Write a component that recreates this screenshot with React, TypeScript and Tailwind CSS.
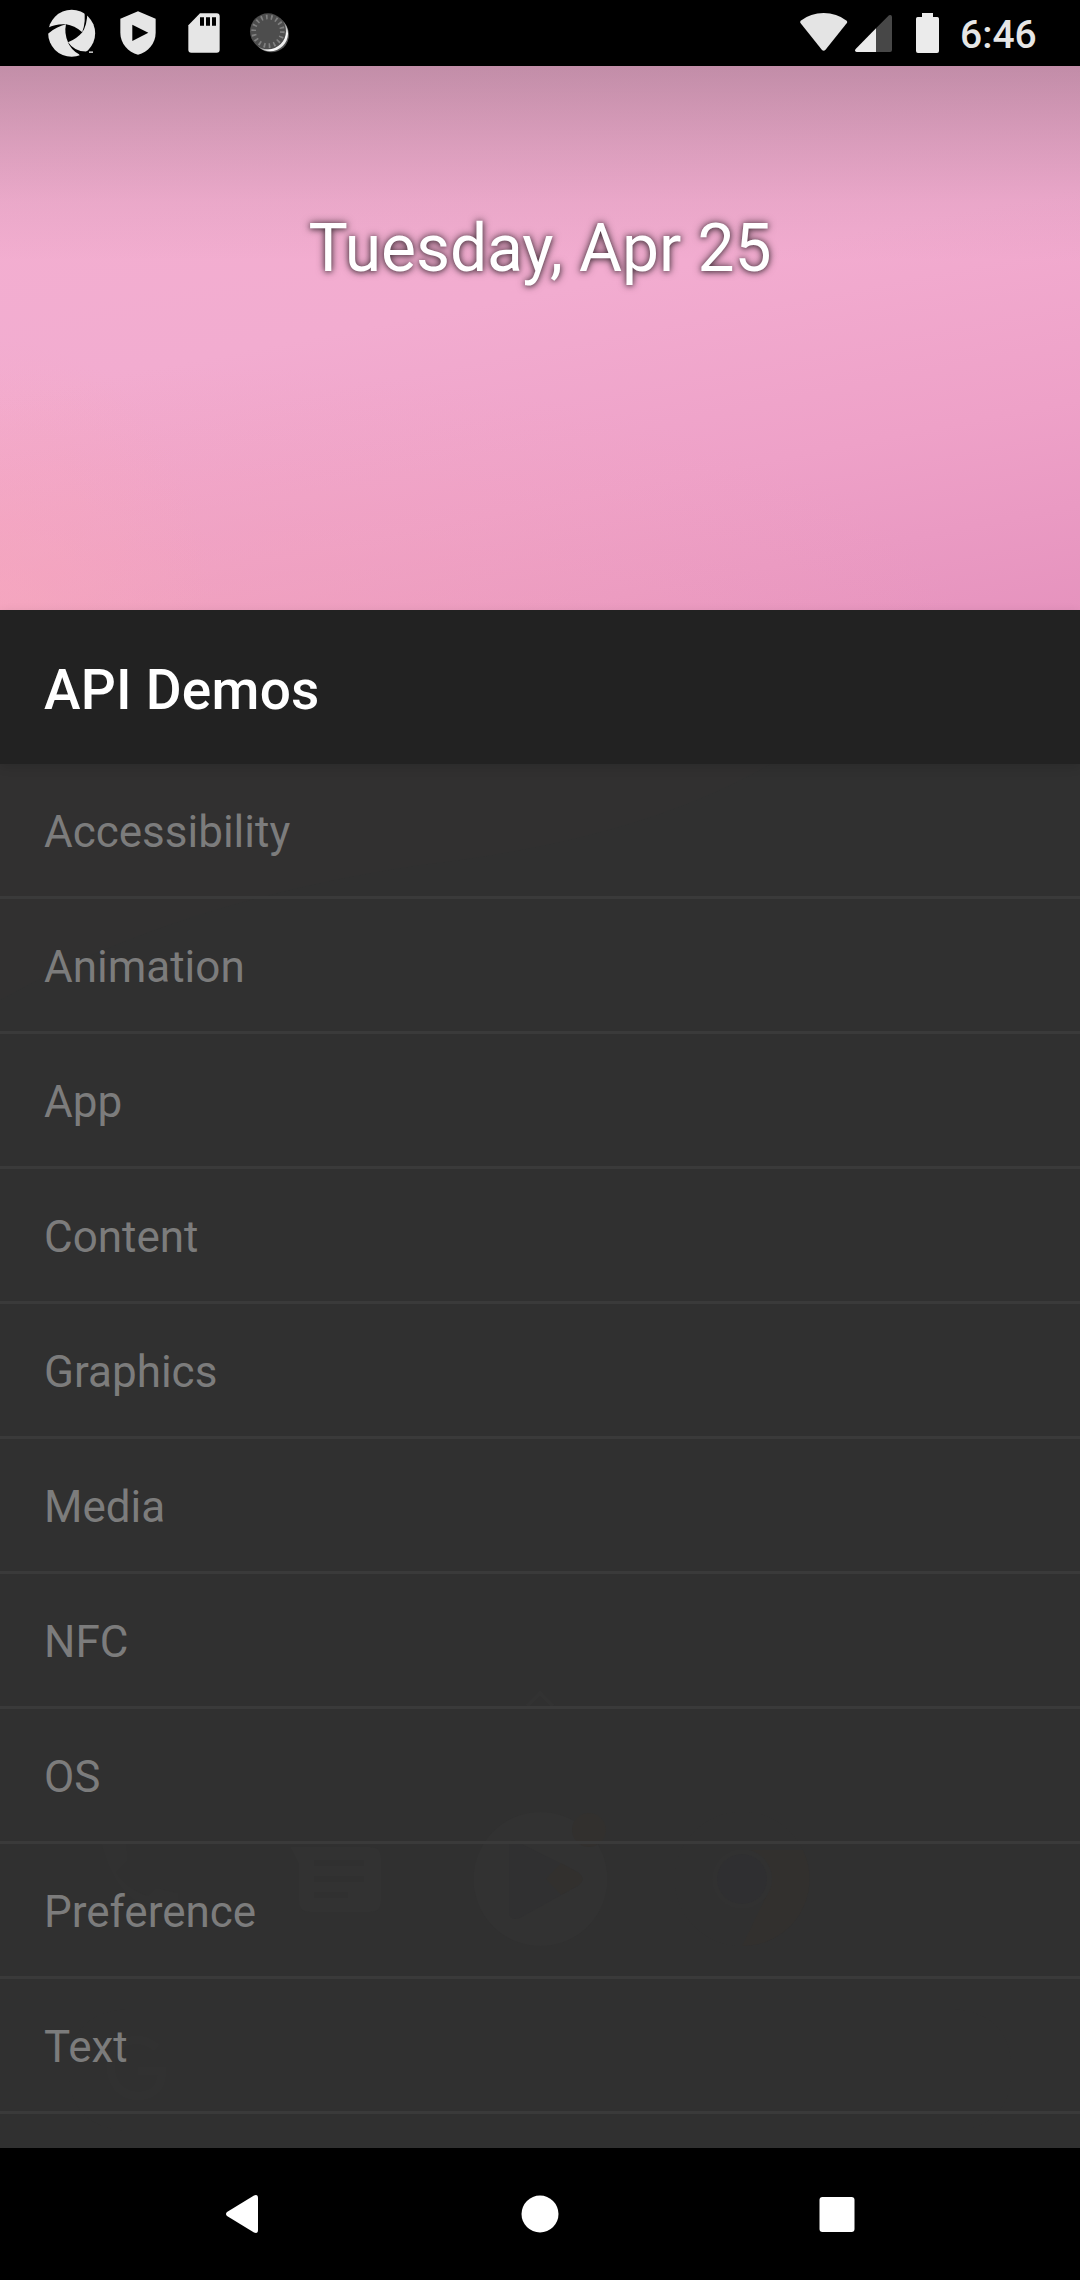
import type { ReactNode } from "react";

const items = [
  "Accessibility",
  "Animation",
  "App",
  "Content",
  "Graphics",
  "Media",
  "NFC",
  "OS",
  "Preference",
  "Text",
];

function ApertureIcon() {
  return (
    <svg className="h-[50px] w-[50px]" viewBox="144 27 150 150">
      <circle cx="215" cy="100" r="70.5" fill="#e6e6e6" />
      <path d="M198 73Q223 76 247 97Q230 117 204 127Q192 100 198 73Z" fill="#000" />
      <path d="M140 86Q165 70 200 73Q172 78 144 101Z" fill="#000" />
      <path d="M252 28Q259 66 246 98Q262 76 262 36Z" fill="#000" />
      <path d="M203 125Q212 148 237 163L246 180L266 154Q226 158 203 125Z" fill="#000" />
      <path d="M267 154h12v5h-12z" fill="#bbb" />
    </svg>
  );
}

function ShieldIcon() {
  return (
    <svg className="h-[44px] w-[36px]" viewBox="360 33 108 132">
      <path
        d="M414 34L467 56V98C467 130 444 156 414 164C384 156 361 130 361 98V56Z"
        fill="#e6e6e6"
      />
      <path d="M397 74L445 98.500L397 123Z" fill="#000" />
    </svg>
  );
}

function SdCardIcon() {
  return (
    <svg className="h-[40px] w-[32px]" viewBox="564 39 96 120">
      <path
        d="M600 40H650Q659 40 659 49V149Q659 158 650 158H574Q565 158 565 149V76Z"
        fill="#e6e6e6"
      />
      <path d="M600 52h12v25h-12zM618 52h12v25h-12zM636 52h12v25h-12z" fill="#000" />
    </svg>
  );
}

function SpinnerIcon() {
  return (
    <svg className="h-[42px] w-[42px]" viewBox="747 36 126 126">
      <defs>
        <linearGradient id="rim" x1="0" y1="0" x2="1" y2="1">
          <stop offset="0.5" stopColor="#555" />
          <stop offset="0.75" stopColor="#fff" />
          <stop offset="1" stopColor="#ccc" />
        </linearGradient>
      </defs>
      <circle cx="814" cy="104" r="53" fill="#555" />
      <circle cx="810" cy="100" r="54" fill="url(#rim)" />
      <circle cx="804" cy="94" r="54" fill="#4d4d4d" />
      <circle
        cx="804"
        cy="94"
        r="43"
        fill="none"
        stroke="#808080"
        strokeWidth="14"
        strokeDasharray="5 10.010"
      />
    </svg>
  );
}

function StatusBar() {
  return (
    <header className="flex h-[66px] shrink-0 items-start bg-black">
      <div className="flex flex-1 pl-12">
        <div className="pt-[9px]">
          <ApertureIcon />
        </div>
        <div className="pt-[11px] pl-[22px]">
          <ShieldIcon />
        </div>
        <div className="pt-[13px] pl-8">
          <SdCardIcon />
        </div>
        <div className="pt-3 pl-[29px]">
          <SpinnerIcon />
        </div>
      </div>
      <svg className="mt-3 h-10 w-12" viewBox="60 36 144 120">
        <path
          d="M62 62Q92 39 131 39Q170 39 200 62Q203 66 200 70L136 150Q131 155 126 150L62 70Q59 66 62 62Z"
          fill="#e4e4e4"
        />
      </svg>
      <svg className="mt-[14px] ml-[7px] h-[39px] w-[37px]" viewBox="225 42 111 117">
        <path d="M288 85L327 46Q335 42 336 50V150Q336 156 330 156H288Z" fill="#474747" />
        <path d="M288 85V156H230Q222 154 227 147Z" fill="#ebebeb" />
      </svg>
      <svg className="mt-[13px] ml-6 h-10 w-[23px]" viewBox="408 39 69 120">
        <path
          d="M426 39H459V51H472Q477 51 477 56V153Q477 159 471 159H414Q408 159 408 153V56Q408 51 413 51H426Z"
          fill="#ebebeb"
        />
      </svg>
      <span className="mr-[44px] ml-[21px] w-[76px] pt-[15px] text-[39px] leading-[40px] font-medium whitespace-nowrap text-[#e6e6e6]">
        6:46
      </span>
    </header>
  );
}

/* Home-screen icons showing faintly through the translucent panel. */
function HomeScreenGhost() {
  return (
    <svg
      className="pointer-events-none absolute inset-0 h-full w-full opacity-80"
      viewBox="0 764 1080 1384"
    >
      <path d="M0 764H770Q640 840 420 865Q180 900 0 1000Z" fill="#323131" />
      <path d="M527 1706L540 1693L553 1706" fill="none" stroke="#333333" strokeWidth="4" />
      <path
        d="M101 1842H126L128 1860L116 1872Q128 1890 148 1896L156 1888L178 1893V1908Q120 1918 101 1842Z"
        fill="#323232"
      />
      <path
        d="M290 1847H370Q381 1847 381 1858V1901Q381 1912 370 1912H310Q299 1912 299 1901V1864Z"
        fill="#333333"
      />
      <path d="M314 1860h50v6h-50zM314 1876h50v6h-50zM314 1892h34v6h-34z" fill="#303030" />
      <circle cx="540.500" cy="1879" r="67" fill="#333333" />
      <path d="M509 1846Q509 1838 518 1842L579 1873Q586 1879 579 1885L518 1919Q509 1920 509 1912Z" fill="#303032" />
      <path d="M561 1863L579 1873Q586 1879 579 1885L561 1895L546 1879Z" fill="#33302e" />
      <circle cx="589" cy="1830" r="17" fill="#33302e" />
      <circle cx="742" cy="1879" r="67" fill="#313131" />
      <path d="M742 1850H803A67 67 0 0 1 742 1946L768 1892Z" fill="#33302e" />
      <circle cx="742" cy="1879" r="30" fill="#323232" />
      <circle cx="742" cy="1879" r="25" fill="#2f2f32" />
      <path
        d="M130 2009H950Q1011 2012 1011 2070T950 2131H130Q69 2128 69 2070T130 2009Z"
        fill="#313131"
      />
      <path
        d="M157 2048Q144 2036 125 2042Q108 2050 111 2072Q116 2096 140 2096Q162 2094 162 2071H138"
        fill="none"
        stroke="#323232"
        strokeWidth="9"
      />
    </svg>
  );
}

function Row({ children }: { children: ReactNode }) {
  return (
    <li className="flex h-[135px] items-center border-b-3 border-[#3a3a3a] px-11 pt-[3px] text-[44px] leading-[52px] text-[#7c7c7c]">
      {children}
    </li>
  );
}

export default function App() {
  return (
    <div className="flex h-[2280px] w-[1080px] flex-col overflow-hidden bg-black font-['Roboto',sans-serif]">
      <StatusBar />
      <section className="h-[544px] shrink-0 bg-[linear-gradient(180deg,rgba(75,60,70,0.29)_0%,rgba(75,60,70,0.15)_14%,rgba(75,60,70,0.05)_25%,transparent_36%),radial-gradient(ellipse_20%_50%_at_0%_100%,rgba(248,168,188,0.55),transparent),radial-gradient(ellipse_75%_50%_at_15%_105%,rgba(243,163,186,0.55),transparent),linear-gradient(169deg,#f3b0d0_0%,#f2acd0_44%,#eea1c8_72%,#e693be_100%)] pt-[141px] text-center">
        <h2 className="text-[66px] leading-[84px] font-normal tracking-[-0.12px] text-white [text-shadow:0_0_8px_rgba(0,0,0,0.65),0_1px_5px_rgba(0,0,0,0.45)]">
          Tuesday, Apr 25
        </h2>
      </section>
      <div className="relative z-10 flex h-[154px] shrink-0 items-center bg-[#222222] px-11 pt-[6px] shadow-[0_3px_10px_rgba(0,0,0,0.12)]">
        <h1 className="text-[55px] leading-[64px] font-medium tracking-[0.22px] text-white">
          API Demos
        </h1>
      </div>
      <main className="relative h-[1384px] shrink-0 overflow-hidden bg-[#303030]">
        <HomeScreenGhost />
        <ul className="relative">
          {items.map((item) => (
            <Row key={item}>{item}</Row>
          ))}
        </ul>
      </main>
      <nav className="flex h-[132px] shrink-0 items-center justify-center gap-[260px] bg-black">
        <svg className="h-10 w-[37px]" viewBox="0 0 37 40">
          <path d="M3 18L30 1.500Q34 0 34 4V36Q34 40 30 38.500L3 22Q1 20 3 18Z" fill="#fff" />
        </svg>
        <svg className="h-[38px] w-[38px]" viewBox="0 0 38 38">
          <circle cx="19" cy="19" r="18.500" fill="#fff" />
        </svg>
        <svg className="h-[37px] w-[37px]" viewBox="0 0 37 37">
          <rect x="0.500" y="1" width="35" height="35" rx="3" fill="#fff" />
        </svg>
      </nav>
    </div>
  );
}
